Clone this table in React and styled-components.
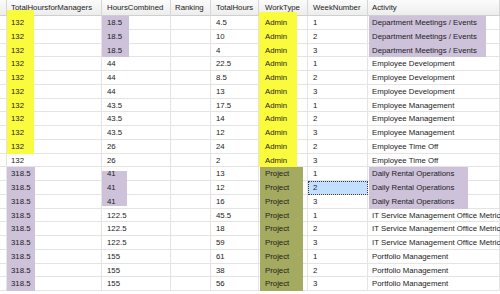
import styled, { createGlobalStyle } from "styled-components"

const GlobalStyle = createGlobalStyle`
    html, body {
        margin: 0;
        padding: 0;
        background: #fff;
        overflow: hidden;
    }
`

const YELLOW = '#fbfb3e'
const PURPLE = '#cdc2da'
const GREEN = '#a4aa5f'
const LINE = '#e4e4e4'

const columns = ['', 'TotalHoursforManagers', 'HoursCombined', 'Ranking', 'TotalHours', 'WorkType', 'WeekNumber', 'Activity']
const pads = [0, 4, 5, 4, 5, 6, 5, 4]

const rows = [
    [132, 18.5, '', 4.5, 'Admin', 1, 'Department Meetings / Events'],
    [132, 18.5, '', 10, 'Admin', 2, 'Department Meetings / Events'],
    [132, 18.5, '', 4, 'Admin', 3, 'Department Meetings / Events'],
    [132, 44, '', 22.5, 'Admin', 1, 'Employee Development'],
    [132, 44, '', 8.5, 'Admin', 2, 'Employee Development'],
    [132, 44, '', 13, 'Admin', 3, 'Employee Development'],
    [132, 43.5, '', 17.5, 'Admin', 1, 'Employee Management'],
    [132, 43.5, '', 14, 'Admin', 2, 'Employee Management'],
    [132, 43.5, '', 12, 'Admin', 3, 'Employee Management'],
    [132, 26, '', 24, 'Admin', 2, 'Employee Time Off'],
    [132, 26, '', 2, 'Admin', 3, 'Employee Time Off'],
    [318.5, 41, '', 13, 'Project', 1, 'Daily Rental Operations'],
    [318.5, 41, '', 12, 'Project', 2, 'Daily Rental Operations'],
    [318.5, 41, '', 16, 'Project', 3, 'Daily Rental Operations'],
    [318.5, 122.5, '', 45.5, 'Project', 1, 'IT Service Management Office Metrics'],
    [318.5, 122.5, '', 18, 'Project', 2, 'IT Service Management Office Metrics'],
    [318.5, 122.5, '', 59, 'Project', 3, 'IT Service Management Office Metrics'],
    [318.5, 155, '', 61, 'Project', 1, 'Portfolio Management'],
    [318.5, 155, '', 38, 'Project', 2, 'Portfolio Management'],
    [318.5, 155, '', 56, 'Project', 3, 'Portfolio Management'],
]

// highlighter marks painted over the grid (row index, column index)
function markFor(r, c) {
    if (c === 1 && r <= 9) return { c: YELLOW, x: 0, w: 27 }
    if (c === 1 && r >= 11) return { c: PURPLE, x: 0, w: 28 }
    if (c === 2 && r <= 2) return { c: PURPLE, x: 0, w: 27 }
    if (c === 2 && r >= 11 && r <= 13) return { c: PURPLE, x: 0, w: 25, t: r === 11 ? 4 : 0, b: r === 13 ? 3 : 0 }
    if (c === 5 && r <= 10) return { c: YELLOW, x: 0, w: 38 }
    if (c === 5 && r >= 11) return { c: GREEN, x: 1, w: 43 }
    if (c === 7 && r <= 2) return { c: PURPLE, x: 1, w: 117 }
    if (c === 7 && r >= 11 && r <= 13) return { c: PURPLE, x: 1, w: 99 }
    return null
}

const headerMarks = {
    1: { c: YELLOW, x: 0, w: 27, t: 10 },
    5: { c: YELLOW, x: 0, w: 38, t: 12 },
}

const paint = m => m
    ? `linear-gradient(${m.c},${m.c}) ${m.x}px ${m.t || 0}px / ${m.w}px calc(100% - ${(m.t || 0) + (m.b || 0)}px) no-repeat, `
    : ''

export default function App() {
    return (
        <>
            <GlobalStyle />
            <Grid>
                {columns.map((name, c) => (
                    <HeadCell key={c} $pad={pads[c]} $mark={headerMarks[c]}>{name}</HeadCell>
                ))}
                {rows.map((row, r) => (
                    [null, ...row].map((value, c) => (
                        <Cell
                            key={r + '-' + c}
                            $pad={pads[c]}
                            $mark={markFor(r, c)}
                            $selected={r === 12 && c === 6}
                        >
                            {value}
                        </Cell>
                    ))
                ))}
            </Grid>
        </>
    )
}

const Grid = styled.div`
    display: grid;
    grid-template-columns: 7px 95px 69px 40px 48px 49px 60px 1fr;
    grid-template-rows: 16px;
    grid-auto-rows: 13.75px;
    width: 500px;
    height: 294px;
    overflow: hidden;
    font-family: "Liberation Sans", Arial, sans-serif;
    font-size: 7.8px;
    color: #1c1c1c;
`
const HeadCell = styled.div`
    box-sizing: border-box;
    padding-left: ${p => p.$pad}px;
    line-height: 15px;
    white-space: nowrap;
    overflow: hidden;
    color: #222;
    background:
        ${p => paint(p.$mark)}
        linear-gradient(#d6d6d6,#d6d6d6) right top / 1px 100% no-repeat,
        linear-gradient(#cfcfcf,#cfcfcf) left bottom / 100% 1px no-repeat,
        linear-gradient(#fbfbfb, #ececec);
`
const Cell = styled.div`
    box-sizing: border-box;
    padding-left: ${p => p.$pad}px;
    line-height: 13.75px;
    white-space: nowrap;
    overflow: hidden;
    background:
        ${p => paint(p.$mark)}
        linear-gradient(${LINE},${LINE}) right top / 1px 100% no-repeat,
        linear-gradient(${LINE},${LINE}) left bottom / 100% 1px no-repeat,
        ${p => p.$selected ? '#c3dfff' : '#fff'};
    outline: ${p => p.$selected ? '1px dotted #3a3a3a' : 'none'};
    outline-offset: -1px;
`
